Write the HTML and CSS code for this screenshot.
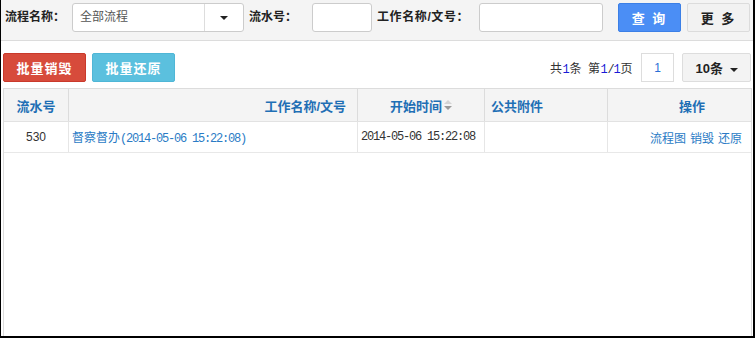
FILE: index.html
```html
<!DOCTYPE html>
<html lang="zh-CN">
<head>
    <meta charset="UTF-8">
    <title>流程回收站</title>
    <link rel="stylesheet" href="styles.css">
</head>
<body>
<div class="frame">

    <!-- 查询条件 -->
    <div class="search-bar">
        <label class="lbl">流程名称：</label>
        <div class="select">
            <span class="select-text">全部流程</span>
            <span class="select-btn"><span class="caret"></span></span>
        </div>
        <label class="lbl lbl-no">流水号：</label>
        <input class="input input-no" type="text">
        <label class="lbl lbl-title">工作名称/文号：</label>
        <input class="input input-title" type="text">
        <button class="btn btn-query">查 询</button>
        <button class="btn btn-more">更 多</button>
    </div>

    <!-- 批量操作 + 分页 -->
    <div class="toolbar">
        <button class="btn btn-danger">批量销毁</button>
        <button class="btn btn-info">批量还原</button>
        <div class="pager">
            <span class="pager-info">共<em>1</em>条<span class="gap"></span>第<em>1</em><span class="mono">/</span><em>1</em>页</span>
            <input class="page-input" type="text" value="1">
            <button class="btn btn-size">10条 <span class="caret"></span></button>
        </div>
    </div>

    <!-- 列表 -->
    <div class="grid-wrap">
        <div class="grid-row grid-head">
            <div class="cell c-no">流水号</div>
            <div class="cell c-title">工作名称/文号</div>
            <div class="cell c-time">开始时间
                <svg class="sort" width="8" height="12" viewBox="0 0 8 12">
                    <path d="M0 5 L4 1 L8 5 Z" fill="#d4d4d4"/>
                    <path d="M0 7 L8 7 L4 11 Z" fill="#9a9a9a"/>
                </svg>
            </div>
            <div class="cell c-file">公共附件</div>
            <div class="cell c-op">操作</div>
        </div>
        <div class="grid-row grid-body">
            <div class="cell c-no">530</div>
            <div class="cell c-title"><a href="#">督察督办<span class="mono">(2014-05-06 15:22:08)</span></a></div>
            <div class="cell c-time"><span class="mono">2014-05-06 15:22:08</span></div>
            <div class="cell c-file"></div>
            <div class="cell c-op">
                <a href="#">流程图</a>
                <a href="#">销毁</a>
                <a href="#">还原</a>
            </div>
        </div>
    </div>

</div>
</body>
</html>
```

FILE: styles.css
```css
body {
    margin: 0;
    padding: 0;
    background-color: white;
    font-family: "Liberation Sans", "Noto Sans CJK SC", sans-serif;
    font-size: 12px;
    color: #333;
}

.frame {
    height: 338px;
    box-sizing: border-box;
    border-left: 1px solid #000;
    border-right: 2px solid #000;
    border-bottom: 2px solid #000;
    display: flex;
    flex-direction: column;
}

/* Search Bar */
.search-bar {
    height: 41px;
    box-sizing: border-box;
    background-color: #f4f4f4;
    border-bottom: 1px solid #dcdcdc;
    display: flex;
    align-items: flex-start;
    padding: 3px 0 0 4px;
}

.lbl {
    font-weight: bold;
    font-size: 12px;
    color: #222;
    line-height: 29px;
    white-space: nowrap;
}

.lbl-no { margin-left: 5px; width: 63px; }
.lbl-title { margin-left: 5px; width: 102px; letter-spacing: 0.6px; }

.select {
    margin-left: 7px;
    width: 172px;
    height: 29px;
    box-sizing: border-box;
    border: 1px solid #ccc;
    border-radius: 3px;
    background-color: white;
    display: flex;
}

.select-text {
    flex: 1;
    padding-left: 7px;
    line-height: 27px;
    color: #555;
}

.select-btn {
    width: 38px;
    border-left: 1px solid #ddd;
    display: flex;
    align-items: center;
    justify-content: center;
}

.caret {
    display: inline-block;
    width: 0;
    height: 0;
    border-top: 4px solid #222;
    border-left: 4px solid transparent;
    border-right: 4px solid transparent;
    vertical-align: middle;
}

.input {
    height: 29px;
    box-sizing: border-box;
    border: 1px solid #ccc;
    border-radius: 3px;
    background-color: white;
    padding: 0;
}

.input-no { width: 60px; }
.input-title { width: 124px; }

.btn {
    height: 29px;
    box-sizing: border-box;
    border-radius: 2px;
    font-family: "Liberation Sans", "Noto Sans CJK SC", sans-serif;
    font-weight: bold;
    font-size: 13px;
    padding: 0;
    cursor: pointer;
}

.btn-query {
    margin-left: 15px;
    width: 63px;
    background-color: #4b8ef5;
    border: 1px solid #3b7fe6;
    color: white;
    letter-spacing: 2px;
}

.btn-more {
    margin-left: 6px;
    width: 63px;
    background-color: #f2f2f2;
    border: 1px solid #dcdcdc;
    color: #222;
    letter-spacing: 2px;
}

/* Toolbar */
.toolbar {
    display: flex;
    align-items: center;
    padding: 12px 2px 6px 2px;
}

.btn-danger {
    width: 83px;
    background-color: #d74b3b;
    border: 1px solid #c9392b;
    color: white;
    letter-spacing: 1px;
}

.btn-info {
    margin-left: 6px;
    width: 83px;
    background-color: #5bc0de;
    border: 1px solid #4fb6d6;
    color: white;
    letter-spacing: 1px;
}

.pager {
    margin-left: auto;
    display: flex;
    align-items: center;
}

.pager-info {
    color: #333;
    font-size: 12px;
    letter-spacing: 0.5px;
}

.pager-info em {
    font-style: normal;
    color: #1a1ad6;
    font-family: "Liberation Mono", monospace;
    letter-spacing: -1.2px;
    padding-right: 1px;
}

.pager-info .gap {
    display: inline-block;
    width: 6px;
}

.page-input {
    margin-left: 8px;
    width: 33px;
    height: 29px;
    box-sizing: border-box;
    border: 1px solid #ddd;
    text-align: center;
    color: #2a6fd6;
    font-size: 12px;
    padding: 0;
}

.btn-size {
    margin-left: 8px;
    width: 69px;
    background-color: #f3f3f3;
    border: 1px solid #ddd;
    color: #222;
    font-size: 13px;
}

.btn-size .caret {
    margin-left: 3px;
}

/* Grid */
.grid-wrap {
    flex: 1;
    margin: 0 1px 0 2px;
    border: 1px solid #dcdcdc;
    border-bottom: none;
}

.grid-row {
    display: grid;
    grid-template-columns: 65px 289px 127px 123px 1fr;
}

.cell {
    box-sizing: border-box;
    border-right: 1px solid #e6e6e6;
    display: flex;
    align-items: center;
    white-space: nowrap;
}

.cell:last-child {
    border-right: none;
}

.grid-head {
    height: 32px;
    background-color: #f4f4f4;
    border-bottom: 1px solid #e2e2e2;
}

.grid-head .cell {
    border-right-color: #dcdcdc;
    font-weight: bold;
    font-size: 13px;
    color: #1f6fb5;
}

.grid-body {
    height: 30px;
    border-bottom: 1px solid #e8e8e8;
}

.c-no { justify-content: center; }
.c-title { justify-content: flex-end; padding-right: 11px; }
.c-time { justify-content: center; }
.c-file { padding-left: 6px; }
.c-op { justify-content: center; padding-left: 25px; }

.grid-body .c-title { justify-content: flex-start; padding-left: 3px; }
.grid-body .c-time { justify-content: flex-start; padding-left: 3px; }
.grid-body .c-op { justify-content: flex-end; padding-right: 9px; }

.sort {
    margin-left: 2px;
}

.mono {
    font-family: "Liberation Mono", monospace;
    font-size: 12px;
    letter-spacing: -1.2px;
}

a {
    text-decoration: none;
    color: #2a7bc5;
}

.c-op a {
    margin-left: 4px;
}
```
